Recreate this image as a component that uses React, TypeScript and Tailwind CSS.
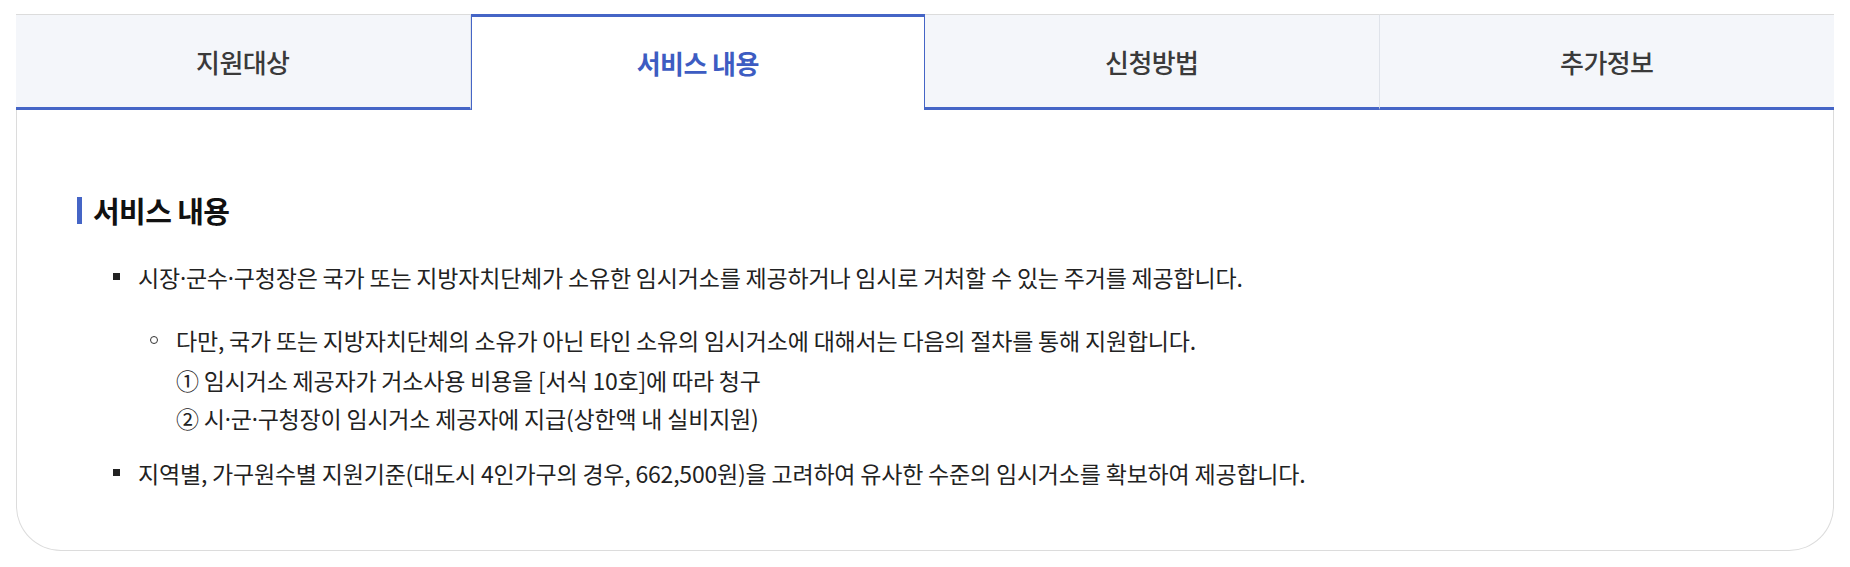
const tabs = ["지원대상", "서비스 내용", "신청방법", "추가정보"];

const font = { fontFamily: '"Noto Sans CJK KR", "Noto Sans", sans-serif' };
const latin = { fontFamily: '"Noto Sans", sans-serif' };

// narrow middle dot, the CJK one is full width
const Dot = () => <span style={latin}>·</span>;

function Tab({ label, active, last }: { label: string; active: boolean; last: boolean }) {
  if (active) {
    return (
      <div className="flex h-[96px] items-center justify-center border-x border-t-[3px] border-[#4565c6] bg-white pb-[3px]">
        <span className="text-[26px] font-bold tracking-[-0.6px] text-[#3d5cc2]">{label}</span>
      </div>
    );
  }
  return (
    <div
      className={`flex h-[96px] items-center justify-center border-t border-b-[3px] border-t-[#dcdcdc] border-b-[#4565c6] bg-[#f4f6fa] ${
        last ? "" : "border-r border-r-[#dfe3ea]"
      }`}
    >
      <span className="text-[26px] font-medium tracking-[-0.6px] text-[#3a3a3a]">{label}</span>
    </div>
  );
}

export default function App() {
  return (
    <div className="min-h-[567px] bg-white px-[16px] pt-[14px] pb-[19px]" style={font}>
      <div className="rounded-b-[45px] border-x border-b border-[#dcdcdc]">
        <div className="-mx-px grid grid-cols-4">
          {tabs.map((t, i) => (
            <Tab key={t} label={t} active={i === 1} last={i === tabs.length - 1} />
          ))}
        </div>

        <div className="px-[60px] pt-[82px] pb-[58px]">
          <h3 className="flex items-center gap-[11px] text-[29px] leading-[36px] font-bold tracking-[-0.6px] text-[#111]">
            <span className="h-[27px] w-[5px] bg-[#4565c6]" />
            서비스 내용
          </h3>

          <ul className="mt-[30px] pl-[36px] text-[23px] leading-[38px] tracking-[-0.2px] text-[#222]">
            <li className="flex">
              <span className="mt-[15px] mr-[18px] h-[7px] w-[7px] shrink-0 bg-[#222]" />
              <div>
                <p>
                  시장<Dot />군수<Dot />구청장은 국가 또는 지방자치단체가 소유한 임시거소를 제공하거나 임시로 거처할 수 있는 주거를 제공합니다.
                </p>
                <ul className="mt-[24px] pl-[12px]">
                  <li className="flex">
                    <span className="mt-[15px] mr-[18px] h-[8px] w-[8px] shrink-0 rounded-full border border-[#333]" />
                    <div>
                      <p>다만, 국가 또는 지방자치단체의 소유가 아닌 타인 소유의 임시거소에 대해서는 다음의 절차를 통해 지원합니다.</p>
                      <p className="mt-[2px]">① 임시거소 제공자가 거소사용 비용을 [서식 10호]에 따라 청구</p>
                      <p>
                        ② 시<Dot />군<Dot />구청장이 임시거소 제공자에 지급(상한액 내 실비지원)
                      </p>
                    </div>
                  </li>
                </ul>
              </div>
            </li>
            <li className="mt-[16px] flex">
              <span className="mt-[15px] mr-[18px] h-[7px] w-[7px] shrink-0 bg-[#222]" />
              <p>지역별, 가구원수별 지원기준(대도시 4인가구의 경우, 662,500원)을 고려하여 유사한 수준의 임시거소를 확보하여 제공합니다.</p>
            </li>
          </ul>
        </div>
      </div>
    </div>
  );
}
